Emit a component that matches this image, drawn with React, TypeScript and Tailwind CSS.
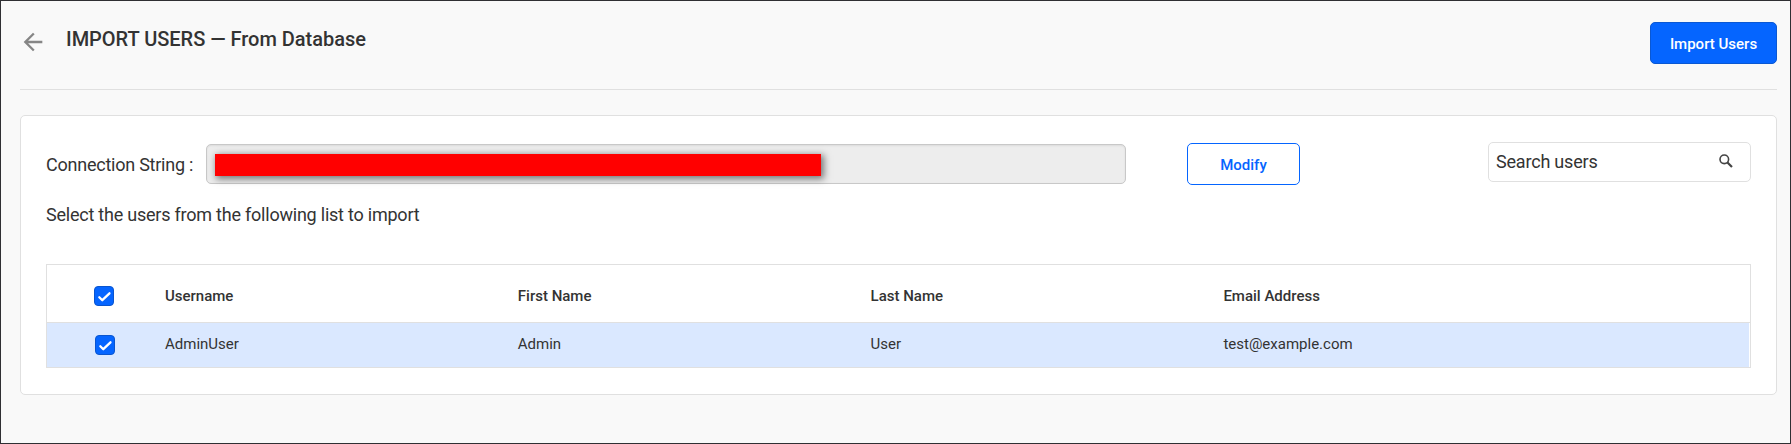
import React from "react";

const columns = ["Username", "First Name", "Last Name", "Email Address"];
const rows = [["AdminUser", "Admin", "User", "test@example.com"]];

function Checkbox() {
  return (
    <span className="flex size-5 shrink-0 items-center justify-center rounded-[4px] border border-[#0a55cf] bg-[#0565ff]">
      <svg width="18" height="18" viewBox="0 0 18 18" fill="none">
        <path d="M4.3 10.2 L7.3 13.2 L14.5 6.3" stroke="#fff" strokeWidth="2.3" strokeLinecap="round" strokeLinejoin="round" />
      </svg>
    </span>
  );
}

export default function App() {
  return (
    <div className="h-[444px] w-[1791px] border border-[#2f2f33] bg-[#f9f9f9] pr-[13px] pl-[19px] font-['Roboto',sans-serif] text-[#333]">
      <header className="flex h-[89px] items-start justify-between border-b border-[#e0e0e0]">
        <div className="flex items-start">
          <svg className="mt-[27px] -ml-px" width="28" height="28" viewBox="0 0 24 24" fill="#868686">
            <path d="M20 11H7.83l5.59-5.59L12 4l-8 8 8 8 1.41-1.41L7.83 13H20v-2z" />
          </svg>
          <h1 className="mt-[24px] ml-[19px] text-[20px] leading-[28px] font-medium tracking-[-0.02px]">IMPORT USERS — From Database</h1>
        </div>
        <button className="mt-[21px] h-[42px] w-[127px] rounded-[5px] border border-[#0a58d3] bg-[#0565ff] pt-[2px] text-[15px] font-medium text-white">
          Import Users
        </button>
      </header>

      <main className="mt-[25px] h-[280px] rounded-[5px] border border-[#e0e0e0] bg-white px-[25px] pt-[26px]">
        <div className="flex h-[43px] items-start">
          <label className="mt-[9px] w-[160px] text-[18px] leading-[28px] tracking-[-0.24px]">Connection String :</label>
          <div className="mt-[2px] flex h-10 w-[920px] items-start rounded-[5px] border border-[#c8c8c8] bg-[#ededed] pt-[9px] pl-2 shadow-[inset_0_1px_2px_rgba(0,0,0,0.08)]">
            <div className="h-[22px] w-[606px] bg-[#ff0000] shadow-[2px_2px_7px_1px_rgba(0,0,0,0.5)]" />
          </div>
          <button className="mt-px ml-[61px] h-[42px] w-[113px] rounded-[5px] border border-[#0565ff] bg-white pt-[2px] text-[15px] font-medium text-[#0565ff]">
            Modify
          </button>
          <div className="ml-auto flex h-10 w-[263px] items-center justify-between rounded-[5px] border border-[#e0e0e0] pr-[17px] pl-[7px]">
            <span className="text-[18px] leading-[28px] tracking-[-0.2px]">Search users</span>
            <svg className="-mt-[2px]" width="14" height="14" viewBox="0 0 14 14" fill="none" stroke="#444">
              <circle cx="5.3" cy="5.3" r="4.3" strokeWidth="1.6" />
              <path d="M8.5 8.5 L13 13" strokeWidth="2.2" />
            </svg>
          </div>
        </div>
        <p className="mt-[16px] text-[18px] leading-[28px] tracking-[-0.225px]">Select the users from the following list to import</p>

        <div className="mt-[35px] h-[104px] border border-[#e0e0e0] pr-px">
          <div className="-mr-px flex h-[58px] items-center border-b border-[#e0e0e0] pt-[5px] pl-[47px] text-[15px] font-medium">
            <div className="w-[71px]">
              <Checkbox />
            </div>
            {columns.map((c) => (
              <div key={c} className="w-[352.8px]">{c}</div>
            ))}
          </div>
          {rows.map((r) => (
            <div key={r[0]} className="flex h-11 items-center bg-[#dae8ff] pl-12 text-[15px]">
              <div className="w-[70px]">
                <Checkbox />
              </div>
              {r.map((v) => (
                <div key={v} className="w-[352.8px] pb-[2px]">{v}</div>
              ))}
            </div>
          ))}
        </div>
      </main>
    </div>
  );
}
